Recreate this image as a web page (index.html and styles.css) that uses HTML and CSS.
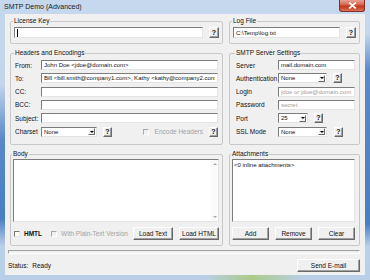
FILE: index.html
```html
<!DOCTYPE html>
<html lang="en">
<head>
  <meta charset="UTF-8" />
  <meta name="viewport" content="width=device-width, initial-scale=1.0" />
  <title>SMTP Demo (Advanced)</title>
  <link rel="stylesheet" href="styles.css">
</head>
<body>

  <div class="window">
    <div class="titlebar">
      <span class="title">SMTP Demo (Advanced)</span>
      <button class="close-btn" title="Close">
        <svg width="9" height="7" viewBox="0 0 9 7"><path d="M1.2 0.6 L7.8 6.4 M7.8 0.6 L1.2 6.4" stroke="#fff" stroke-width="1.7" /></svg>
      </button>
    </div>

    <div class="client">
      <div class="panes">

        <fieldset class="group top">
          <legend>License Key</legend>
          <div class="line">
            <div class="edit"><span class="caret"></span></div>
            <button class="btn help">?</button>
          </div>
        </fieldset>

        <fieldset class="group top">
          <legend>Log File</legend>
          <div class="line">
            <input class="edit" type="text" value="C:\Temp\log.txt" />
            <button class="btn help">?</button>
          </div>
        </fieldset>

        <fieldset class="group headers">
          <legend>Headers and Encodings</legend>
          <div class="form">
            <label>From:</label>
            <input class="edit" type="text" value="John Doe <jdoe@domain.com>" />
            <label>To:</label>
            <input class="edit" type="text" value="Bill <bill.smith@company1.com>, Kathy <kathy@company2.com>" />
            <label>CC:</label>
            <input class="edit" type="text" />
            <label>BCC:</label>
            <input class="edit" type="text" />
            <label>Subject:</label>
            <input class="edit" type="text" />
            <label>Charset</label>
            <div class="opts">
              <div class="combo charset"><span class="combo-text">None</span><span class="drop"></span></div>
              <button class="btn help">?</button>
              <span class="check disabled push"></span>
              <span class="muted">Encode Headers</span>
              <button class="btn help">?</button>
            </div>
          </div>
        </fieldset>

        <fieldset class="group smtp">
          <legend>SMTP Server Settings</legend>
          <div class="form">
            <label>Server</label>
            <input class="edit" type="text" value="mail.domain.com" />
            <label>Authentication</label>
            <div class="opts">
              <div class="combo wide"><span class="combo-text">None</span><span class="drop"></span></div>
              <button class="btn help">?</button>
            </div>
            <label>Login</label>
            <input class="edit" type="text" placeholder="jdoe or jdoe@domain.com" />
            <label>Password</label>
            <input class="edit" type="text" placeholder="secret" />
            <label>Port</label>
            <div class="opts">
              <div class="combo narrow"><span class="combo-text">25</span><span class="drop"></span></div>
              <button class="btn help">?</button>
            </div>
            <label>SSL Mode</label>
            <div class="opts">
              <div class="combo wide"><span class="combo-text">None</span><span class="drop"></span></div>
              <button class="btn help ssl">?</button>
            </div>
          </div>
        </fieldset>

        <fieldset class="group body-group">
          <legend>Body</legend>
          <div class="memo">
            <textarea></textarea>
            <div class="vscroll">
              <span class="arrow up"></span>
              <span class="arrow down"></span>
            </div>
          </div>
          <div class="foot">
            <span class="check"></span>
            <span class="strong">HMTL</span>
            <span class="check disabled gap"></span>
            <span class="muted">With Plain-Text Version</span>
            <button class="btn load push">Load Text</button>
            <button class="btn load">Load HTML</button>
          </div>
        </fieldset>

        <fieldset class="group attach">
          <legend>Attachments</legend>
          <div class="list">&lt;0 inline attachments&gt;</div>
          <div class="attach-btns">
            <button class="btn">Add</button>
            <button class="btn">Remove</button>
            <button class="btn">Clear</button>
          </div>
        </fieldset>

      </div>

      <div class="progress"></div>

      <div class="statusbar">
        <span><span class="status-label">Status:</span>Ready</span>
        <button class="btn send">Send E-mail</button>
      </div>
    </div>
  </div>

</body>
</html>
```

FILE: styles.css
```css
body {
  margin: 0;
  font-family: "Liberation Sans", Arial, sans-serif;
  font-size: 6.5px;
  color: #111;
  background: #bcd2eb;
}

.window {
  width: 370px;
  height: 280px;
  box-sizing: border-box;
  padding: 0 5px 5px;
  display: flex;
  flex-direction: column;
  background:
    linear-gradient(to bottom, transparent 30%, rgba(45, 105, 185, 0.7) 50%, rgba(45, 105, 185, 0.8) 78%, transparent 88%) left top / 5px 100% no-repeat,
    linear-gradient(to bottom, transparent 12%, rgba(45, 105, 185, 0.7) 25%, rgba(45, 105, 185, 0.8) 80%, transparent 88%) right top / 5px 100% no-repeat,
    linear-gradient(to right, transparent 55%, rgba(165, 200, 95, 0.7) 68%, transparent 82%) left bottom / 100% 5px no-repeat,
    linear-gradient(to bottom, #c6d8ed, #b9cfe8);
}

/* title bar */

.titlebar {
  height: 14px;
  display: flex;
  justify-content: space-between;
  align-items: flex-start;
}

.title {
  margin: 3px 0 0 -1px;
  font-size: 7px;
  line-height: 8px;
  color: #1a1a1a;
}

.close-btn {
  width: 26px;
  height: 12px;
  padding: 0;
  border: 1px solid #80312a;
  border-top: none;
  border-radius: 0 0 3px 3px;
  background: linear-gradient(#e8a395, #d6604a 45%, #c4351f 55%, #dc7052);
  display: flex;
  align-items: center;
  justify-content: center;
}

/* client area */

.client {
  flex: 1;
  background: #f0f0f0;
  padding: 3px 5px 3px 3px;
  display: flex;
  flex-direction: column;
}

.panes {
  display: grid;
  grid-template-columns: 213px 131px;
  grid-template-rows: 27px 96px 96px;
  gap: 5px 6px;
  margin-left: 2px;
}

.group {
  margin: 0;
  padding: 0 3px 4px;
  min-width: 0;
  border: 1px solid #c8c8c8;
  border-radius: 2px;
}

.group legend {
  padding: 0 1px;
  margin-left: -1px;
  line-height: 8px;
}

.line {
  display: flex;
  align-items: center;
  gap: 6px;
  margin-top: 2px;
}

/* controls */

.edit {
  box-sizing: border-box;
  height: 10px;
  min-width: 0;
  margin: 0;
  padding: 0 2px;
  border: 1px solid;
  border-color: #7c7c7c #e4e4e4 #e4e4e4 #7c7c7c;
  background: #fff;
  font: inherit;
  font-size: 6px;
  color: #111;
  outline: none;
}

.edit::placeholder {
  color: #a0a0a0;
}

.line .edit {
  flex: 1;
  height: 11px;
}

.caret {
  display: block;
  width: 1px;
  height: 8px;
  margin-top: 0.5px;
  background: #000;
}

.btn {
  box-sizing: border-box;
  padding: 0;
  margin: 0;
  font: inherit;
  color: #111;
  background: #f0f0f0;
  border: 1px solid;
  border-color: #fff #696969 #696969 #fff;
  box-shadow: inset -1px -1px #a0a0a0;
}

.help {
  width: 9px;
  height: 10px;
  font-weight: bold;
  font-size: 7px;
  line-height: 8px;
}

.line .help {
  width: 10px;
  height: 11px;
}

.form {
  display: grid;
  grid-template-columns: 26px 1fr;
  grid-auto-rows: 10px;
  row-gap: 3.33px;
  align-items: center;
  margin-top: 3px;
}

.headers {
  padding: 0 4px 4px;
}

.smtp {
  padding: 0 4px 4px 6px;
}

.smtp .form {
  grid-template-columns: 42px 1fr;
}

.form .edit {
  width: 100%;
}

.opts {
  display: flex;
  align-items: center;
  gap: 6px;
  height: 10px;
}

.combo {
  box-sizing: border-box;
  height: 10px;
  display: flex;
  align-items: center;
  padding: 0 1px 0 2px;
  border: 1px solid;
  border-color: #7c7c7c #e4e4e4 #e4e4e4 #7c7c7c;
  background: #fff;
  font-size: 6px;
}

.combo-text {
  flex: 1;
}

.charset {
  width: 56px;
}

.wide {
  width: 49px;
}

.narrow {
  width: 30px;
}

.ssl {
  margin-left: 1px;
}

.drop {
  box-sizing: border-box;
  width: 7px;
  height: 7px;
  display: flex;
  align-items: center;
  justify-content: center;
  background: #f0f0f0;
  border: 1px solid;
  border-color: #fff #696969 #696969 #fff;
}

.drop::after {
  content: "";
  border-left: 2px solid transparent;
  border-right: 2px solid transparent;
  border-top: 2px solid #000;
}

.check {
  box-sizing: border-box;
  width: 6px;
  height: 6px;
  border: 1px solid;
  border-color: #7a7a7a #e8e8e8 #e8e8e8 #7a7a7a;
  background: #fff;
}

.check.disabled {
  background: #f0f0f0;
  border-color: #a8a8a8 #fff #fff #a8a8a8;
}

.push {
  margin-left: auto;
}

.muted {
  color: #a3a3a3;
}

.strong {
  font-weight: bold;
}

/* body */

.body-group {
  padding: 0 3px 3px 2px;
}

.memo {
  box-sizing: border-box;
  height: 63px;
  margin-top: 1px;
  display: flex;
  border: 1px solid;
  border-color: #7c7c7c #e4e4e4 #e4e4e4 #7c7c7c;
  background: #fff;
}

.memo textarea {
  flex: 1;
  border: none;
  resize: none;
  outline: none;
  padding: 0;
}

.vscroll {
  width: 7px;
  display: flex;
  flex-direction: column;
  justify-content: space-between;
  align-items: center;
  padding: 3px 0;
  background: #fafafa;
}

.arrow {
  border-left: 2px solid transparent;
  border-right: 2px solid transparent;
}

.arrow.up {
  border-bottom: 2px solid #a8a8a8;
}

.arrow.down {
  border-top: 2px solid #a8a8a8;
}

.foot {
  display: flex;
  align-items: center;
  gap: 4px;
  height: 13px;
  margin-top: 5px;
  padding-left: 1px;
}

.gap {
  margin-left: 5px;
}

.load {
  width: 40px;
  height: 13px;
}

.foot .load + .load {
  margin-left: 2px;
}

/* attachments */

.attach {
  padding: 0 4px 3px 2px;
}

.list {
  box-sizing: border-box;
  height: 63px;
  margin-top: 1px;
  padding: 1px;
  line-height: 8px;
  font-size: 6px;
  border: 1px solid;
  border-color: #7c7c7c #e4e4e4 #e4e4e4 #7c7c7c;
  background: #fff;
}

.attach-btns {
  display: grid;
  grid-template-columns: repeat(3, 1fr);
  gap: 6px;
  height: 13px;
  margin-top: 5px;
}

/* status */

.progress {
  box-sizing: border-box;
  height: 4px;
  margin-top: 4px;
  border: 1px solid;
  border-color: #a0a0a0 #fff #fff #a0a0a0;
}

.statusbar {
  display: flex;
  justify-content: space-between;
  align-items: center;
  margin-top: 5px;
}

.status-label {
  margin-right: 4px;
}

.send {
  width: 63px;
  height: 13px;
}
```
